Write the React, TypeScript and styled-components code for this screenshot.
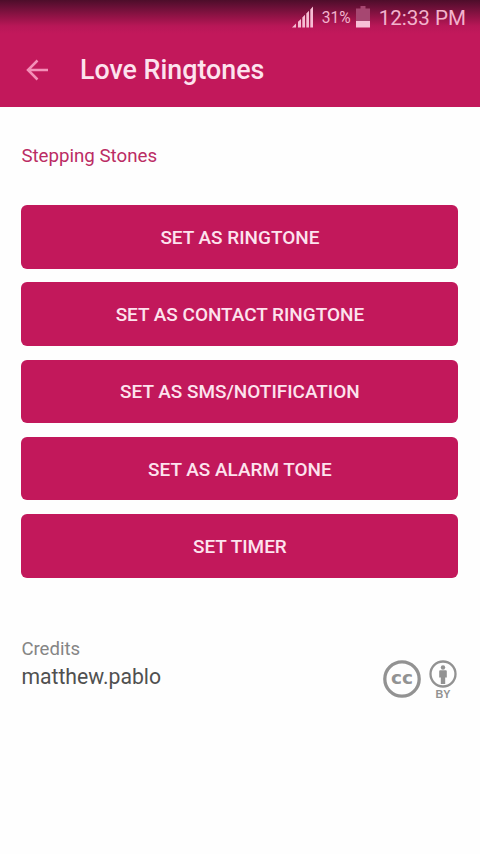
import React from "react";
import styled, { createGlobalStyle } from "styled-components";

const GlobalStyle = createGlobalStyle`
  * { box-sizing: border-box; }
  html, body { margin: 0; padding: 0; background: #fefefe; }
  body { font-family: Roboto, "Liberation Sans", sans-serif; overflow: hidden; }
`;

const Screen = styled.div`
  width: 480px;
  height: 854px;
  display: flex;
  flex-direction: column;
  background: #fefefe;
`;

const Header = styled.header`
  height: 106.5px;
  flex: none;
  color: #fde3ee;
  background: linear-gradient(to bottom, #4d0d2a 0, #6a1037 7px, #941347 17px, #b81757 26px, #c2185b 34px);
`;

const StatusBar = styled.div`
  height: 34px;
  display: flex;
  align-items: center;
  justify-content: flex-end;
  padding-right: 14px;
  color: #f3b3cd;

  svg { display: block; flex: none; }
`;

const BatteryLevel = styled.span`
  font-size: 15.6px;
  line-height: 34px;
  margin: 1px 5px 0 8px;
`;

const Clock = styled.span`
  font-size: 20.6px;
  line-height: 34px;
  margin: 1px 0 0 9px;
`;

const Toolbar = styled.div`
  height: 72px;
  display: flex;
  align-items: center;
  padding-left: 26px;
`;

const BackButton = styled.button`
  border: 0;
  padding: 0;
  margin-right: 31px;
  background: none;
  color: #f48fb8;
  display: flex;
`;

const Title = styled.h1`
  margin: 0;
  font-size: 26.8px;
  line-height: 32px;
  font-weight: 500;
`;

const Content = styled.main`
  padding: 38px 21.6px 0 21.4px;
`;

const SongName = styled.div`
  font-size: 18.7px;
  line-height: 22px;
  color: #bb2c64;
`;

const Actions = styled.div`
  margin-top: 38.5px;
  display: flex;
  flex-direction: column;
  gap: 13.8px;
`;

const ActionButton = styled.button`
  height: 63.5px;
  width: 100%;
  padding: 1.8px 0 0;
  border: 0;
  border-radius: 6px;
  background: #c2185b;
  color: #fde3ee;
  font: 500 18.95px/24px Roboto, "Liberation Sans", sans-serif;
  text-transform: uppercase;
`;

const Footer = styled.footer`
  margin-top: 59px;
  display: flex;
  justify-content: space-between;
`;

const CreditsLabel = styled.div`
  font-size: 18.6px;
  line-height: 24px;
  color: #858585;
`;

const CreditsName = styled.div`
  font-size: 21.2px;
  line-height: 28px;
  margin-top: 2px;
  color: #505050;
`;

const License = styled.div`
  display: flex;
  gap: 8px;
  padding: 23px 1px 0 0;
`;

const actions = [
  "Set as ringtone",
  "Set as contact ringtone",
  "Set as SMS/notification",
  "Set as alarm tone",
  "Set timer",
];

const SignalIcon = () => (
  <svg width="22" height="22" viewBox="0 0 22 22" fill="#f6bdd3">
    <path d="M0 21.5 4 17.5v4zM6 15.8 9 13v8.5H6zM10.3 11.5 13 8.8v12.7h-2.700zM14.300 7.600 17 4.800v16.700h-2.700zM18.300 3.500 21 .5v21h-2.700z" />
  </svg>
);

const BatteryIcon = () => (
  <svg width="14" height="22" viewBox="0 0 14 22">
    <path d="M4.500 0h5v2.500H14V15H0V2.500h4.500z" fill="#a64771" />
    <path d="M0 15h14v6.500H0z" fill="#f8c0d7" />
  </svg>
);

const BackIcon = () => (
  <svg width="23" height="22" viewBox="0 0 23 22" fill="none" stroke="currentColor" strokeWidth="2.500">
    <path d="M22 11H2.500M11.500 1.500 2 11l9.500 9.500" />
  </svg>
);

const CreativeCommonsIcon = () => (
  <svg width="38" height="38" viewBox="0 0 38 38" fill="#929292">
    <circle cx="19" cy="19" r="17.200" fill="none" stroke="#929292" strokeWidth="3.300" />
    <text x="19" y="24.200" textAnchor="middle" textLength="22" lengthAdjust="spacingAndGlyphs" fontFamily="DejaVu Sans, sans-serif" fontSize="18.500" fontWeight="700">cc</text>
  </svg>
);

const AttributionIcon = () => (
  <svg width="28" height="40" viewBox="0 0 28 40" fill="#929292">
    <circle cx="14" cy="14" r="12.500" fill="none" stroke="#929292" strokeWidth="2.300" />
    <circle cx="14" cy="7.500" r="2.200" />
    <path d="M11.200 10.300h5.600q1 0 1 1v6.200h-1.600v6.500h-4.400v-6.500h-1.600v-6.200q0-1 1-1z" />
    <text x="14" y="38" textAnchor="middle" textLength="15" lengthAdjust="spacingAndGlyphs" fontFamily="Liberation Sans, sans-serif" fontSize="11" fontWeight="700">BY</text>
  </svg>
);

export default function App() {
  return (
    <>
      <GlobalStyle />
      <Screen>
        <Header>
          <StatusBar>
            <SignalIcon />
            <BatteryLevel>31%</BatteryLevel>
            <BatteryIcon />
            <Clock>12:33 PM</Clock>
          </StatusBar>
          <Toolbar>
            <BackButton aria-label="Back"><BackIcon /></BackButton>
            <Title>Love Ringtones</Title>
          </Toolbar>
        </Header>
        <Content>
          <SongName>Stepping Stones</SongName>
          <Actions>
            {actions.map((label) => (
              <ActionButton key={label}>{label}</ActionButton>
            ))}
          </Actions>
          <Footer>
            <div>
              <CreditsLabel>Credits</CreditsLabel>
              <CreditsName>matthew.pablo</CreditsName>
            </div>
            <License>
              <CreativeCommonsIcon />
              <AttributionIcon />
            </License>
          </Footer>
        </Content>
      </Screen>
    </>
  );
}
